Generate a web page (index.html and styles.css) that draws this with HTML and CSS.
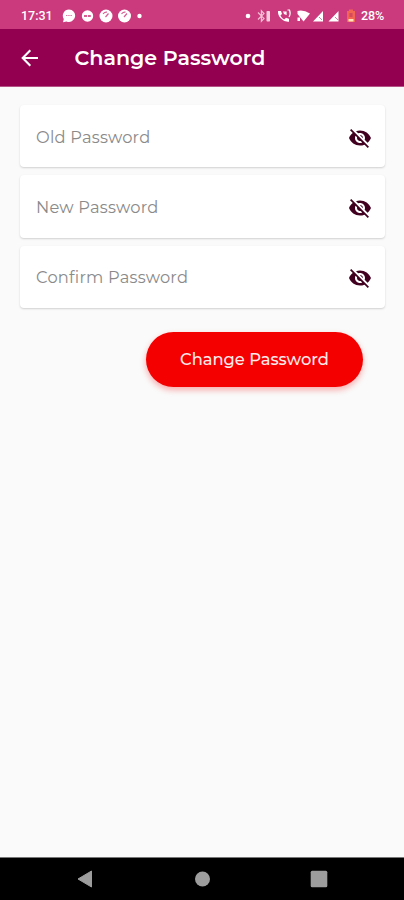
FILE: index.html
```
<!DOCTYPE html>
<html lang="en">
<head>
<meta charset="utf-8">
<title>Change Password</title>
<link rel="stylesheet" href="styles.css">
</head>
<body>
<div class="status">
  <span class="time">17:31</span>
  <svg class="notes" width="84" height="16" viewBox="0 0 84 16" fill="#fff">
    <path d="M7 1.500a6.200 6.200 0 1 1-2.500 11.900L1 14.200 1.800 11A6.200 6.200 0 0 1 7 1.500z"/>
    <path d="M4 7.500h6" stroke="#dc7ca8" stroke-width="1.200" stroke-dasharray="1.500 .7"/>
    <circle cx="25.500" cy="8" r="5.700"/><path d="M22 8h7" stroke="#d75f94" stroke-width="1.800" stroke-dasharray="3 .8"/>
    <circle cx="44" cy="8" r="6.500"/><path d="M41 5.800q2-2 4-1.600M43.500 9l3-3.500" stroke="#d75f94" stroke-width="1.200" fill="none"/>
    <circle cx="62.500" cy="8" r="6.500"/><path d="M59.500 5.800q2-2 4-1.600M62 9l3-3.500" stroke="#d75f94" stroke-width="1.200" fill="none"/>
    <circle cx="77.500" cy="8" r="2.200"/>
  </svg>
  <svg class="system" width="114" height="16" viewBox="0 0 114 16" fill="#fff">
    <circle cx="4" cy="8" r="2.300"/>
    <path d="M14 4.500l6 6-2.600 2.700V2.800L20 5.500l-6 6" fill="none" stroke="#f3bfd5" stroke-width="1.200"/>
    <rect x="22.500" y="3" width="3.500" height="10.500" rx=".7" fill="#f3cddd"/>
    <path d="M34 3h3l1 3-1.600 1.400q1.200 2.700 3.800 4L42 9.800l3 1v3q-4.500.5-7.800-3Q33.500 7 34 3z"/>
    <path d="M39 4h3v3M42 4l-2 2M43.500 2h2q1.500 4-.5 7" fill="none" stroke="#fff" stroke-width="1.200"/>
    <path d="M53.500 6V3q6-1.500 12.500 2.500l-6.500 8z"/><path d="M53.500 9.500h2.500v3.500h-2.500z"/>
    <path d="M79 3v10.500H69zM94.500 3v10.500h-10z"/><path d="M75 9l3 3M91 9l3 3" stroke="#dc7ca8"/>
    <path d="M103 3h2V1.500h4V3h2v11h-8z" fill="#f26552"/><path d="M104.500 11h5v2.500h-5z" fill="#ffe4bd"/><path d="M105.500 5h3v4h-3z" fill="#d5485d"/>
  </svg>
  <span class="battery">28%</span>
</div>
<header class="appbar">
  <svg class="back" width="18" height="18" viewBox="0 0 18 18" fill="none" stroke="#fff" stroke-width="2.100"><path d="M17 9H2M9.300 1.300L1.700 9l7.600 7.700"/></svg>
  <h1 class="title">Change Password</h1>
</header>
<main class="content">
  <div class="field"><span class="label">Old Password</span><svg class="eye" viewBox="0 0 24 24"><path d="M12 7c2.760 0 5 2.240 5 5 0 .65-.13 1.260-.36 1.830l2.920 2.920c1.510-1.260 2.700-2.890 3.430-4.750-1.730-4.390-6-7.500-11-7.500-1.400 0-2.740.25-3.980.7l2.160 2.160C10.740 7.130 11.350 7 12 7zM2 4.270l2.280 2.280.46.46C3.080 8.300 1.780 10.020 1 12c1.730 4.390 6 7.500 11 7.500 1.550 0 3.030-.3 4.380-.84l.42.42L19.730 22 21 20.730 3.270 3 2 4.270zM7.530 9.800l1.550 1.550c-.05.21-.08.43-.08.65 0 1.660 1.340 3 3 3 .22 0 .44-.03.65-.08l1.550 1.550c-.67.33-1.410.53-2.200.53-2.760 0-5-2.240-5-5 0-.79.2-1.530.53-2.200zm4.310-.78l3.150 3.150.02-.16c0-1.660-1.340-3-3-3l-.17.01z"/></svg></div>
  <div class="field"><span class="label">New Password</span><svg class="eye" viewBox="0 0 24 24"><path d="M12 7c2.760 0 5 2.240 5 5 0 .65-.13 1.260-.36 1.830l2.920 2.920c1.510-1.260 2.700-2.890 3.430-4.750-1.730-4.390-6-7.500-11-7.500-1.400 0-2.740.25-3.980.7l2.160 2.160C10.740 7.130 11.350 7 12 7zM2 4.270l2.280 2.280.46.46C3.080 8.300 1.780 10.020 1 12c1.730 4.390 6 7.500 11 7.500 1.550 0 3.030-.3 4.380-.84l.42.42L19.730 22 21 20.730 3.270 3 2 4.270zM7.530 9.800l1.550 1.550c-.05.21-.08.43-.08.65 0 1.660 1.340 3 3 3 .22 0 .44-.03.65-.08l1.550 1.550c-.67.33-1.410.53-2.200.53-2.760 0-5-2.240-5-5 0-.79.2-1.530.53-2.200zm4.310-.78l3.150 3.150.02-.16c0-1.660-1.340-3-3-3l-.17.01z"/></svg></div>
  <div class="field"><span class="label">Confirm Password</span><svg class="eye" viewBox="0 0 24 24"><path d="M12 7c2.760 0 5 2.240 5 5 0 .65-.13 1.260-.36 1.830l2.920 2.920c1.510-1.260 2.700-2.890 3.430-4.750-1.730-4.390-6-7.500-11-7.500-1.400 0-2.740.25-3.980.7l2.160 2.160C10.740 7.130 11.350 7 12 7zM2 4.270l2.280 2.280.46.46C3.080 8.300 1.780 10.020 1 12c1.730 4.390 6 7.500 11 7.500 1.550 0 3.030-.3 4.380-.84l.42.42L19.730 22 21 20.730 3.270 3 2 4.270zM7.530 9.800l1.550 1.550c-.05.21-.08.43-.08.65 0 1.660 1.340 3 3 3 .22 0 .44-.03.65-.08l1.550 1.550c-.67.33-1.410.53-2.200.53-2.760 0-5-2.240-5-5 0-.79.2-1.530.53-2.200zm4.310-.78l3.150 3.150.02-.16c0-1.660-1.340-3-3-3l-.17.01z"/></svg></div>
  <button class="submit">Change Password</button>
</main>
<nav class="nav">
  <svg width="16" height="18" viewBox="0 0 16 18"><path d="M1 9L14.500 1v16z" fill="#9d9d9d" stroke="#9d9d9d" stroke-linejoin="round"/></svg>
  <svg width="16" height="16" viewBox="0 0 16 16"><circle cx="8.500" cy="8" r="7.500" fill="#9d9d9d"/></svg>
  <svg width="18" height="18" viewBox="0 0 18 18"><rect x=".7" y=".7" width="16.600" height="16.600" rx="1.500" fill="#9d9d9d"/></svg>
</nav>
</body>
</html>
```
FILE: styles.css
```
* { box-sizing: border-box; }
body {
  margin: 0;
  width: 404px;
  height: 900px;
  display: flex;
  flex-direction: column;
  background: #fafafa;
  font-family: Montserrat, Inter, sans-serif;
}
svg { display: block; flex: none; }
.status {
  height: 29px;
  display: flex;
  align-items: center;
  padding: 2px 0 0 21px;
  background: #cb3a7c;
  color: #fff;
  font: 500 12.5px/16px Roboto, sans-serif;
}
.time { width: 41px; }
.system { margin-left: 98px; }
.battery { margin-left: 3px; letter-spacing: -.1px; }
.appbar {
  height: 58px;
  display: flex;
  align-items: center;
  padding-left: 21px;
  background: #93004f;
  border-bottom: 1px solid #b45486;
  color: #fff;
}
.title {
  margin: 0 0 0 35.500px;
  font-size: 20.600px;
  line-height: 28px;
  font-weight: 600;
  white-space: nowrap;
}
.content {
  flex: 1;
  display: flex;
  flex-direction: column;
  gap: 8px;
  padding: 18px 19px 0 20px;
}
.field {
  height: 62.300px;
  display: flex;
  align-items: center;
  justify-content: space-between;
  padding: 3px 13px 0 16px;
  border-radius: 4px;
  background: #fff;
  box-shadow: 0 1px 2px rgba(0, 0, 0, .17);
}
.label {
  margin-bottom: 1.500px;
  color: #8a8a8a;
  font-size: 16.300px;
  line-height: 22px;
  font-weight: 400;
  letter-spacing: .22px;
  white-space: nowrap;
}
.eye { width: 24px; height: 24px; fill: #420020; }
.submit {
  align-self: flex-end;
  width: 217px;
  height: 55px;
  margin: 16px 22px 0 0;
  padding: 0;
  border: 0;
  border-radius: 28px;
  background: #f40000;
  box-shadow: 0 3px 6px rgba(244, 0, 0, .32);
  color: #ffe9e9;
  font: 500 16.300px/22px Montserrat, Inter, sans-serif;
  white-space: nowrap;
}
.nav {
  height: 43px;
  display: flex;
  align-items: center;
  justify-content: space-between;
  padding: 0 76px 0 77px;
  background: #000;
  border-top: 1px solid #777;
}
```
